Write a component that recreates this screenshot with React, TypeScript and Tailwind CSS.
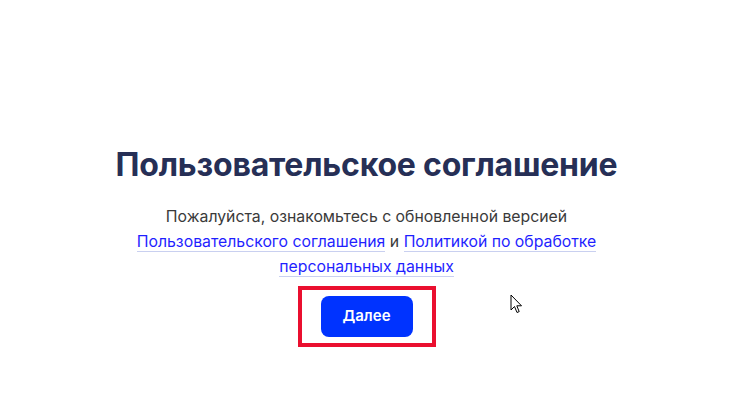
export default function App() {
  return (
    <div className="relative w-[743px] h-[418px] bg-white font-['Inter',sans-serif] overflow-hidden">
      <div className="flex flex-col items-center pt-[145px] pr-[10px]">
        <h1 className="text-[32px] leading-[40px] font-bold text-[#262f56] tracking-[-0.2px]">
          Пользовательское соглашение
        </h1>
        <p className="mt-[19px] w-[490px] text-center text-[15.8px] leading-[25px] text-[#3a3a3a]">
          Пожалуйста, ознакомьтесь с обновленной версией{" "}
          <a className="text-[#1f1fff] border-b border-[#c9d0f0]">Пользовательского соглашения</a>{" "}
          и{" "}
          <a className="text-[#1f1fff] border-b border-[#c9d0f0]">Политикой по обработке персональных данных</a>
        </p>
        <div className="mt-[7px] border-[4px] border-[#ea0f2f] px-[19px] py-[6px]">
          <button className="w-[92px] h-[41px] rounded-[8px] bg-[#0033ff] text-white text-[15px] font-semibold">
            Далее
          </button>
        </div>
      </div>
      <svg className="absolute left-[510px] top-[294px]" width="14" height="20" viewBox="0 0 14 20">
        <path d="M1 1 L1 16 L4.5 12.5 L7 18.5 L9.2 17.6 L6.8 11.8 L11.5 11.8 Z" fill="#fff" stroke="#000" strokeWidth="1" strokeLinejoin="round" />
      </svg>
    </div>
  );
}
